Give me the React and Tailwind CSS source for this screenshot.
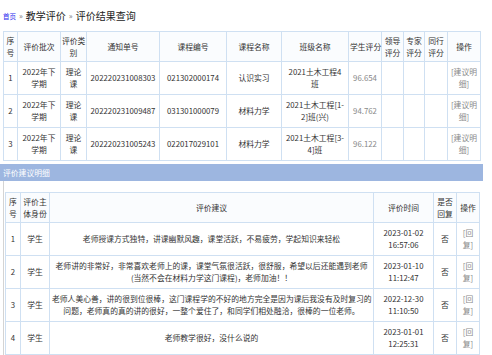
import React from "react";

const bc = "border border-[#cfe0f2]";
const cell = `${bc} px-[2px] py-[4px] text-center align-middle whitespace-nowrap`;
const hcell = `${bc} px-[1px] py-[2.5px] text-center align-middle whitespace-nowrap font-normal text-[#333]`;

const rows1 = [
  ["1", "202220231008303", "021302000174", "认识实习", <>2021土木工程4<br />班</>, "96.654"],
  ["2", "202220231009487", "031301000079", "材料力学", <>2021土木工程[1-<br />2]班(兴)</>, "94.762"],
  ["3", "202220231005243", "022017029101", "材料力学", <>2021土木工程[3-<br />4]班</>, "96.122"],
];

const rows2 = [
  ["1", <>老师授课方式独特，讲课幽默风趣，课堂活跃，不易疲劳，学起知识来轻松</>, "2023-01-02", "16:57:06"],
  ["2", <>老师讲的非常好，非常喜欢老师上的课，课堂气氛很活跃，很舒服，希望以后还能遇到老师<br />(当然不会在材料力学这门课程)，老师加油！！</>, "2023-01-10", "11:12:47"],
  ["3", <>老师人美心善，讲的很到位很棒，这门课程学的不好的地方完全是因为课后我没有及时复习的<br />问题，老师真的真的讲的很好，一整个爱住了，和同学们相处融洽，很棒的一位老师。</>, "2022-12-30", "11:10:50"],
  ["4", <>老师教学很好，没什么说的</>, "2023-01-01", "12:25:31"],
];

export default function App() {
  return (
    <div
      className="w-[492px] h-[355px] overflow-hidden bg-white text-[#333] text-[7.8px] leading-[12px]"
      style={{ fontFamily: '"Noto Sans CJK SC", "Noto Sans", sans-serif' }}
    >
      <div className="h-[31px] flex items-center pl-[3px] gap-[3px]">
        <span className="text-[6.5px] text-[#2a2aee]">首页</span>
        <span className="text-[8px] text-[#777]">»</span>
        <span className="text-[10px] text-[#222]">教学评价</span>
        <span className="text-[8px] text-[#777]">»</span>
        <span className="text-[10px] text-[#222]">评价结果查询</span>
      </div>

      <table className="ml-[3px] table-fixed border-collapse w-[477px]">
        <colgroup>
          <col className="w-[14px]" />
          <col className="w-[43px]" />
          <col className="w-[26px]" />
          <col className="w-[73px]" />
          <col className="w-[67px]" />
          <col className="w-[55px]" />
          <col className="w-[67px]" />
          <col className="w-[33px]" />
          <col className="w-[22px]" />
          <col className="w-[21px]" />
          <col className="w-[23px]" />
          <col className="w-[33px]" />
        </colgroup>
        <thead>
          <tr className="bg-[#fafcfe]">
            <th className={hcell}>序<br />号</th>
            <th className={hcell}>评价批次</th>
            <th className={hcell}>评价类<br />别</th>
            <th className={hcell}>通知单号</th>
            <th className={hcell}>课程编号</th>
            <th className={hcell}>课程名称</th>
            <th className={hcell}>班级名称</th>
            <th className={hcell}>学生评分</th>
            <th className={hcell}>领导<br />评分</th>
            <th className={hcell}>专家<br />评分</th>
            <th className={hcell}>同行<br />评分</th>
            <th className={hcell}>操作</th>
          </tr>
        </thead>
        <tbody>
          {rows1.map((r) => (
            <tr key={r[0]}>
              <td className={cell}>{r[0]}</td>
              <td className={cell}>2022年下<br />学期</td>
              <td className={cell}>理论<br />课</td>
              <td className={cell}>{r[1]}</td>
              <td className={cell}>{r[2]}</td>
              <td className={cell}>{r[3]}</td>
              <td className={cell}>{r[4]}</td>
              <td className={`${cell} text-[#888]`}>{r[5]}</td>
              <td className={cell}></td>
              <td className={cell}></td>
              <td className={cell}></td>
              <td className={`${cell} text-[#888]`}>[建议明<br />细]</td>
            </tr>
          ))}
        </tbody>
      </table>

      <div className="mt-[3px] w-[483px] h-[17px] bg-[#9db6e0] flex items-center pl-[3px] text-white text-[7.8px]">
        评价建议明细
      </div>

      <div className="ml-[3px] border-l border-[#d4d4d4] pl-[1px] pt-[11px] h-[200px]">
        <table className="table-fixed border-collapse w-[474px]">
          <colgroup>
            <col className="w-[15px]" />
            <col className="w-[29px]" />
            <col className="w-[324px]" />
            <col className="w-[60px]" />
            <col className="w-[23px]" />
            <col className="w-[23px]" />
          </colgroup>
          <thead>
            <tr className="bg-[#fafcfe]">
              <th className={hcell}>序<br />号</th>
              <th className={hcell}>评价主<br />体身份</th>
              <th className={hcell}>评价建议</th>
              <th className={hcell}>评价时间</th>
              <th className={hcell}>是否<br />回复</th>
              <th className={hcell}>操作</th>
            </tr>
          </thead>
          <tbody>
            {rows2.map((r) => (
              <tr key={r[0]}>
                <td className={cell}>{r[0]}</td>
                <td className={cell}>学生</td>
                <td className={cell}>{r[1]}</td>
                <td className={cell}>{r[2]}<br />{r[3]}</td>
                <td className={cell}>否</td>
                <td className={`${cell} text-[#888]`}>[回<br />复]</td>
              </tr>
            ))}
          </tbody>
        </table>
      </div>
    </div>
  );
}
